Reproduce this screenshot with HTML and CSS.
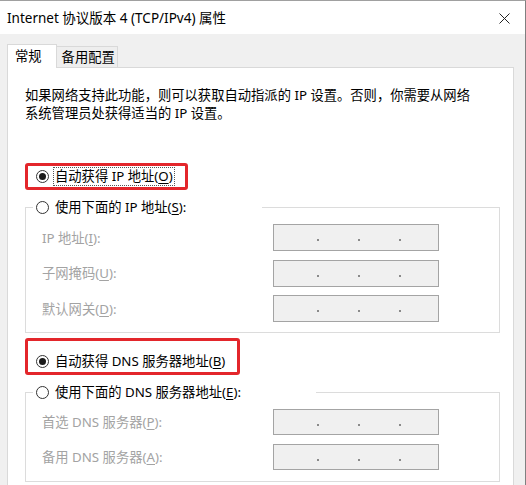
FILE: index.html
```html
<!DOCTYPE html>
<html lang="zh-CN">
<head>
<meta charset="utf-8">
<title>Internet 协议版本 4 (TCP/IPv4) 属性</title>
<link rel="stylesheet" href="styles.css">
</head>
<body>
<div class="window">
  <div class="titlebar">
    <span class="title">Internet 协议版本 4 (TCP/IPv4) 属性</span>
    <svg class="close" width="11" height="11" viewBox="0 0 11 11" aria-label="关闭">
      <path d="M0.5 0.5 L10.5 10.5 M10.5 0.5 L0.5 10.5" stroke="#222" stroke-width="1" fill="none"/>
    </svg>
  </div>
  <div class="body">
    <div class="tabs">
      <div class="tab active">常规</div>
      <div class="tab">备用配置</div>
    </div>
    <div class="panel">
      <p class="desc">如果网络支持此功能，则可以获取自动指派的 IP 设置。否则，你需要从网络<br>系统管理员处获得适当的 IP 设置。</p>

      <div class="mark mark-ip">
        <span class="radio checked"></span>
        <span class="focus">自动获得 IP 地址(<u>O</u>)</span>
      </div>

      <fieldset class="group group-ip">
        <legend class="legend legend-ip"><span class="radio"></span><span class="ltext">使用下面的 IP 地址(<u>S</u>):</span></legend>
        <div class="fields">
          <span class="label">IP 地址(<u>I</u>):</span>
          <div class="ipbox"><i></i><i></i><i></i></div>
          <span class="label">子网掩码(<u>U</u>):</span>
          <div class="ipbox"><i></i><i></i><i></i></div>
          <span class="label">默认网关(<u>D</u>):</span>
          <div class="ipbox"><i></i><i></i><i></i></div>
        </div>
      </fieldset>

      <div class="mark mark-dns">
        <span class="radio checked"></span>
        <span class="rtext">自动获得 DNS 服务器地址(<u>B</u>)</span>
      </div>

      <fieldset class="group group-dns">
        <legend class="legend legend-dns"><span class="radio"></span><span class="ltext">使用下面的 DNS 服务器地址(<u>E</u>):</span></legend>
        <div class="fields fields-dns">
          <span class="label">首选 DNS 服务器(<u>P</u>):</span>
          <div class="ipbox"><i></i><i></i><i></i></div>
          <span class="label">备用 DNS 服务器(<u>A</u>):</span>
          <div class="ipbox"><i></i><i></i><i></i></div>
        </div>
      </fieldset>
    </div>
  </div>
</div>
</body>
</html>
```
FILE: styles.css
```css
* { box-sizing: border-box; }

html, body {
  margin: 0;
  padding: 0;
  background: #f0f0f0;
}

body {
  font-family: "Noto Sans", "Noto Sans CJK SC", sans-serif;
  font-size: 13.3px;
  color: #000;
}

.window {
  width: 526px;
  height: 485px;
  overflow: hidden;
  border-top: 1px solid #a0a0a0;
  border-right: 1px solid #808080;
  background: #f0f0f0;
}

.titlebar {
  height: 33px;
  background: #fff;
  display: flex;
  align-items: center;
  justify-content: space-between;
  padding: 0 15px 0 7px;
}

.title {
  font-size: 13.5px;
  line-height: 18px;
  color: #000;
}

.close {
  display: block;
  margin-top: 1px;
}

.body {
  padding: 10px 11px 0 7px;
}

.tabs {
  display: flex;
  align-items: flex-end;
  height: 23px;
}

.tab {
  line-height: 19px;
  height: 21px;
  padding: 1px 2px 0 5px;
  border-top: 1px solid #d9d9d9;
  border-right: 1px solid #d9d9d9;
  background: #eeeeee;
}

.tab.active {
  position: relative;
  z-index: 1;
  height: 24px;
  margin-bottom: -1px;
  padding: 2px 14px 0 7px;
  border-left: 1px solid #d9d9d9;
  background: #fff;
}

.panel {
  background: #fff;
  border: 1px solid #d9d9d9;
  height: 460px;
  padding: 18px 13px 0 17px;
}

.desc {
  margin: 0;
  line-height: 18px;
  white-space: nowrap;
}

.mark {
  display: flex;
  align-items: center;
  border: 3px solid #e3262b;
  border-radius: 3px;
}

.mark-ip {
  margin-top: 41px;
  width: 163px;
  height: 27px;
  padding-left: 8px;
}

.mark-dns {
  margin-top: 5px;
  width: 215px;
  height: 37px;
  padding: 10px 0 0 8px;
  align-items: flex-start;
}

.radio {
  flex: none;
  display: inline-block;
  width: 13px;
  height: 13px;
  border: 1px solid #333;
  border-radius: 50%;
  background: #fff;
  position: relative;
}

.radio.checked::after {
  content: "";
  position: absolute;
  left: 2px;
  top: 2px;
  width: 7px;
  height: 7px;
  border-radius: 50%;
  background: #1a1a1a;
}

.mark-dns .radio {
  margin-top: 4px;
}

.focus {
  margin-left: 4px;
  padding: 0 1px;
  line-height: 17px;
  border: 1px dotted #555;
  white-space: nowrap;
}

.rtext {
  margin-left: 6px;
  line-height: 21px;
  white-space: nowrap;
}

.group {
  margin: 8px 0 0 0;
  width: 475px;
  border: 1px solid #dcdcdc;
  padding: 8px 0 10px 7px;
}

.group-dns {
  padding-bottom: 11px;
}

.legend {
  display: flex;
  align-items: center;
  padding: 0 0 0 3px;
  height: 18px;
  line-height: 18px;
  white-space: nowrap;
}

.legend-ip { width: 229px; }
.legend-dns { width: 283px; }

.ltext {
  margin-left: 6px;
}

.fields {
  margin-left: 9px;
  display: grid;
  grid-template-columns: 231px 166px;
  grid-auto-rows: 27px;
  row-gap: 8.5px;
  align-items: center;
}

.fields-dns {
  grid-auto-rows: 26px;
  row-gap: 9px;
}

.label {
  color: #a3a3a3;
  line-height: 18px;
  white-space: nowrap;
}

.ipbox {
  height: 100%;
  background: #f0f0f0;
  border: 1px solid #a4a4a4;
  display: flex;
  align-items: center;
  gap: 39px;
  padding: 5px 0 0 43px;
}

.ipbox i {
  display: block;
  width: 2px;
  height: 2px;
  background: #8a8a8a;
}

u {
  text-decoration-thickness: 1px;
  text-underline-offset: 2px;
}
```
